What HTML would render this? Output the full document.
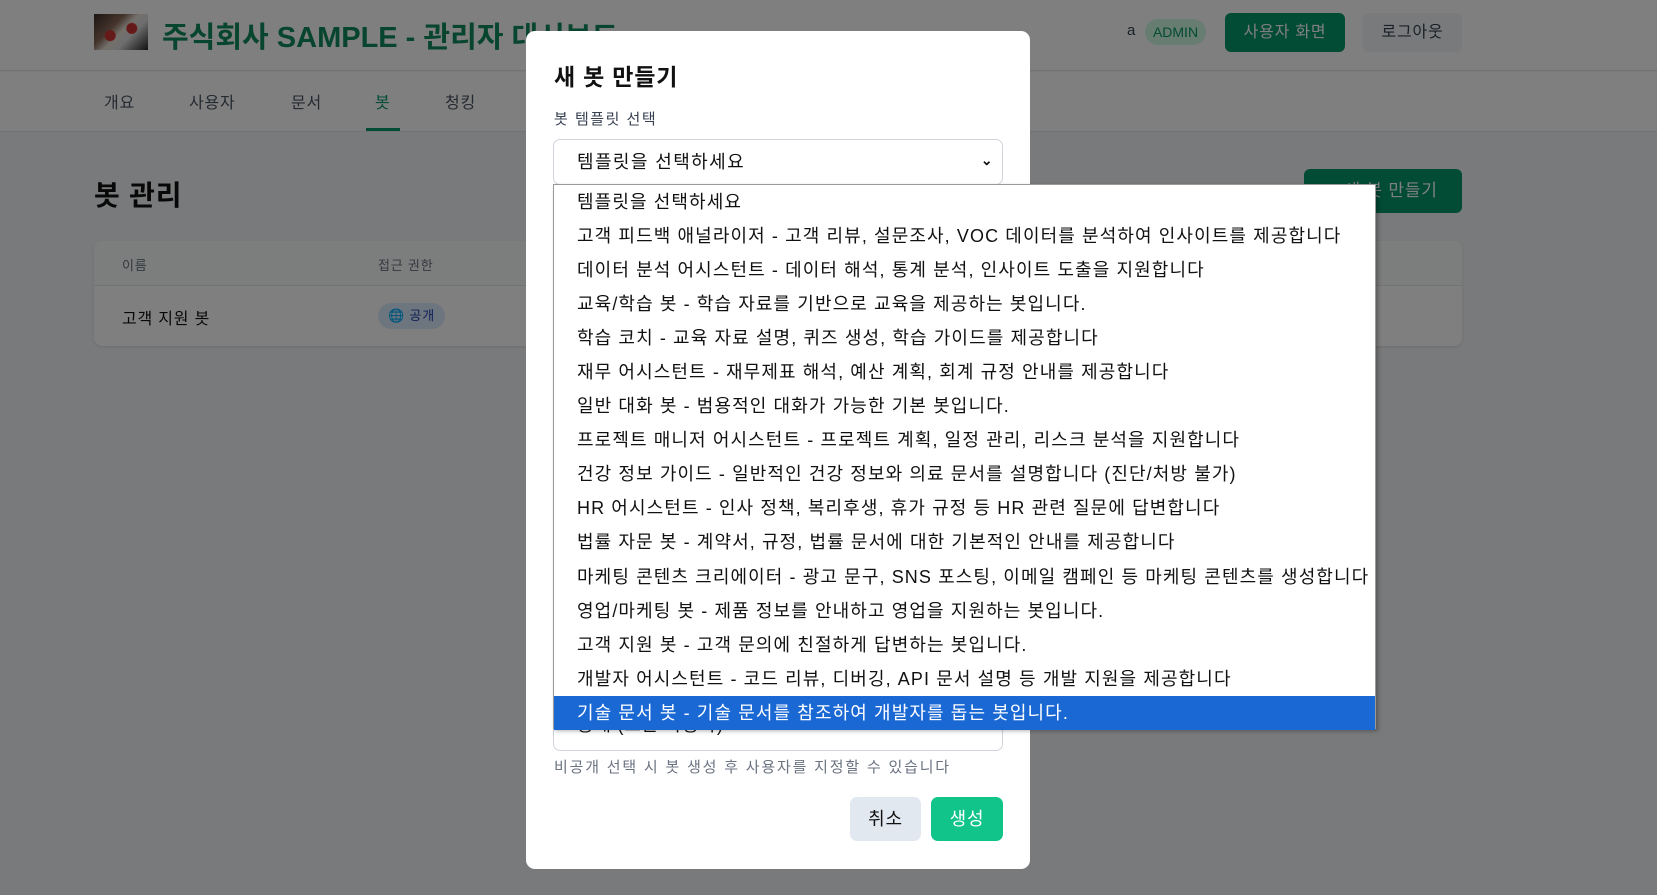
<!DOCTYPE html>
<html><head><meta charset="utf-8"><style>
*{box-sizing:border-box;margin:0;padding:0}
body{width:1657px;height:895px;overflow:hidden;background:#f3f4f6;font-family:"Liberation Sans","Noto Sans CJK KR",sans-serif;position:relative;color:#111;letter-spacing:0.8px}
.hdr{position:absolute;left:0;top:0;width:1657px;height:71px;background:#fff;border-bottom:1px solid #e5e7eb}
.logo{position:absolute;left:94px;top:14px;width:54px;height:36px;background:radial-gradient(circle at 30% 60%,#c33 0 5px,transparent 6px),radial-gradient(circle at 70% 40%,#c33 0 5px,transparent 6px),linear-gradient(135deg,#3a2a22,#8a6a5a 35%,#e8e0d8 50%,#ddd 65%,#222)}
.title{position:absolute;left:162px;top:14px;font-size:29px;font-weight:bold;color:#0f8a5f;white-space:nowrap;letter-spacing:0}
.nav{position:absolute;left:0;top:72px;width:1657px;height:60px;background:#fff;border-bottom:1px solid #e5e7eb}
.nav span{position:absolute;top:17px;font-size:16px;color:#4b5563}
.abs{position:absolute;white-space:nowrap}
.ov{position:absolute;inset:0;background:rgba(0,0,0,.5)}
.modal{position:absolute;left:526px;top:31px;width:504px;height:838px;background:#fff;border-radius:9px}
.dd{position:absolute;left:553px;top:184px;width:823px;height:545px;background:#fff;border:1px solid #999;box-shadow:2px 2px 4px rgba(0,0,0,.3)}
.dd div{height:34.06px;line-height:34px;padding-left:23px;font-size:18px;color:#111;white-space:nowrap;letter-spacing:1.1px}
.dd .sel{background:#1a68d4;color:#fff}
</style></head><body>
<div class="hdr">
<div class="logo"></div>
<div class="title">주식회사 SAMPLE - 관리자 대시보드</div>
<div class="abs" style="left:1127px;top:22px;font-size:15px;color:#374151">a</div>
<div class="abs" style="left:1145px;top:19px;width:61px;height:26px;border-radius:13px;background:#d1fae5;color:#059669;font-size:14px;line-height:26px;text-align:center;letter-spacing:0">ADMIN</div>
<div class="abs" style="left:1225px;top:13px;width:120px;height:39px;border-radius:6px;background:#059669;color:#fff;font-size:16px;line-height:39px;text-align:center">사용자 화면</div>
<div class="abs" style="left:1363px;top:13px;width:99px;height:39px;border-radius:6px;background:#f3f4f6;color:#374151;font-size:16px;line-height:39px;text-align:center">로그아웃</div>
</div>
<div class="nav">
<span style="left:104px">개요</span><span style="left:189px">사용자</span><span style="left:291px">문서</span><span style="left:375px;color:#059669">봇</span><span style="left:445px">청킹</span>
<div class="abs" style="left:366px;top:56px;width:34px;height:3px;background:#059669"></div>
</div>
<div class="abs" style="left:94px;top:174px;font-size:28px;font-weight:bold">봇 관리</div>
<div class="abs" style="left:1304px;top:169px;width:158px;height:44px;border-radius:6px;background:#059669;color:#fff;font-size:17px;line-height:44px;text-align:center">+ 새 봇 만들기</div>
<div class="abs" style="left:94px;top:241px;width:1368px;height:105px;background:#fff;border-radius:8px;box-shadow:0 1px 3px rgba(0,0,0,.1)">
<div style="height:45px;background:#f9fafb;border-bottom:1px solid #e5e7eb;border-radius:8px 8px 0 0"></div>
<div class="abs" style="left:28px;top:14px;font-size:13px;color:#6b7280">이름</div>
<div class="abs" style="left:284px;top:14px;font-size:13px;color:#6b7280">접근 권한</div>
<div class="abs" style="left:28px;top:64px;font-size:16px">고객 지원 봇</div>
<div class="abs" style="left:284px;top:62px;width:67px;height:26px;border-radius:13px;background:#dbeafe;color:#1e40af;font-size:13px;line-height:26px;text-align:center">🌐 공개</div>
</div>
<div class="ov"></div>
<div class="modal">
<div class="abs" style="left:28px;top:27px;font-size:23px;font-weight:bold">새 봇 만들기</div>
<div class="abs" style="left:28px;top:77px;font-size:15px;color:#374151;letter-spacing:1.5px">봇 템플릿 선택</div>
<div class="abs" style="left:27px;top:108px;width:450px;height:46px;border:1px solid #d1d5db;border-radius:7px;font-size:18px;line-height:44px;padding-left:23px;letter-spacing:1.4px">템플릿을 선택하세요<span style="position:absolute;right:8px;top:-2px;font-size:14px;font-weight:bold">⌄</span></div>
<div class="abs" style="left:27px;top:670px;width:450px;height:50px;border:1px solid #d1d5db;border-radius:7px;font-size:18px;line-height:46px;padding-left:23px;overflow:hidden">공개 (모든 사용자)</div>
<div class="abs" style="left:28px;top:725px;font-size:15px;color:#6b7280;letter-spacing:1.8px">비공개 선택 시 봇 생성 후 사용자를 지정할 수 있습니다</div>
<div class="abs" style="left:324px;top:766px;width:71px;height:44px;border-radius:7px;background:#e2e8f0;font-size:18px;line-height:44px;text-align:center">취소</div>
<div class="abs" style="left:405px;top:766px;width:72px;height:44px;border-radius:7px;background:#10c48a;color:#fff;font-size:18px;line-height:44px;text-align:center">생성</div>
</div>
<div class="dd">
<div>템플릿을 선택하세요</div>
<div>고객 피드백 애널라이저 - 고객 리뷰, 설문조사, VOC 데이터를 분석하여 인사이트를 제공합니다</div>
<div>데이터 분석 어시스턴트 - 데이터 해석, 통계 분석, 인사이트 도출을 지원합니다</div>
<div>교육/학습 봇 - 학습 자료를 기반으로 교육을 제공하는 봇입니다.</div>
<div>학습 코치 - 교육 자료 설명, 퀴즈 생성, 학습 가이드를 제공합니다</div>
<div>재무 어시스턴트 - 재무제표 해석, 예산 계획, 회계 규정 안내를 제공합니다</div>
<div>일반 대화 봇 - 범용적인 대화가 가능한 기본 봇입니다.</div>
<div>프로젝트 매니저 어시스턴트 - 프로젝트 계획, 일정 관리, 리스크 분석을 지원합니다</div>
<div>건강 정보 가이드 - 일반적인 건강 정보와 의료 문서를 설명합니다 (진단/처방 불가)</div>
<div>HR 어시스턴트 - 인사 정책, 복리후생, 휴가 규정 등 HR 관련 질문에 답변합니다</div>
<div>법률 자문 봇 - 계약서, 규정, 법률 문서에 대한 기본적인 안내를 제공합니다</div>
<div>마케팅 콘텐츠 크리에이터 - 광고 문구, SNS 포스팅, 이메일 캠페인 등 마케팅 콘텐츠를 생성합니다</div>
<div>영업/마케팅 봇 - 제품 정보를 안내하고 영업을 지원하는 봇입니다.</div>
<div>고객 지원 봇 - 고객 문의에 친절하게 답변하는 봇입니다.</div>
<div>개발자 어시스턴트 - 코드 리뷰, 디버깅, API 문서 설명 등 개발 지원을 제공합니다</div>
<div class="sel">기술 문서 봇 - 기술 문서를 참조하여 개발자를 돕는 봇입니다.</div>
</div>
</body></html>
